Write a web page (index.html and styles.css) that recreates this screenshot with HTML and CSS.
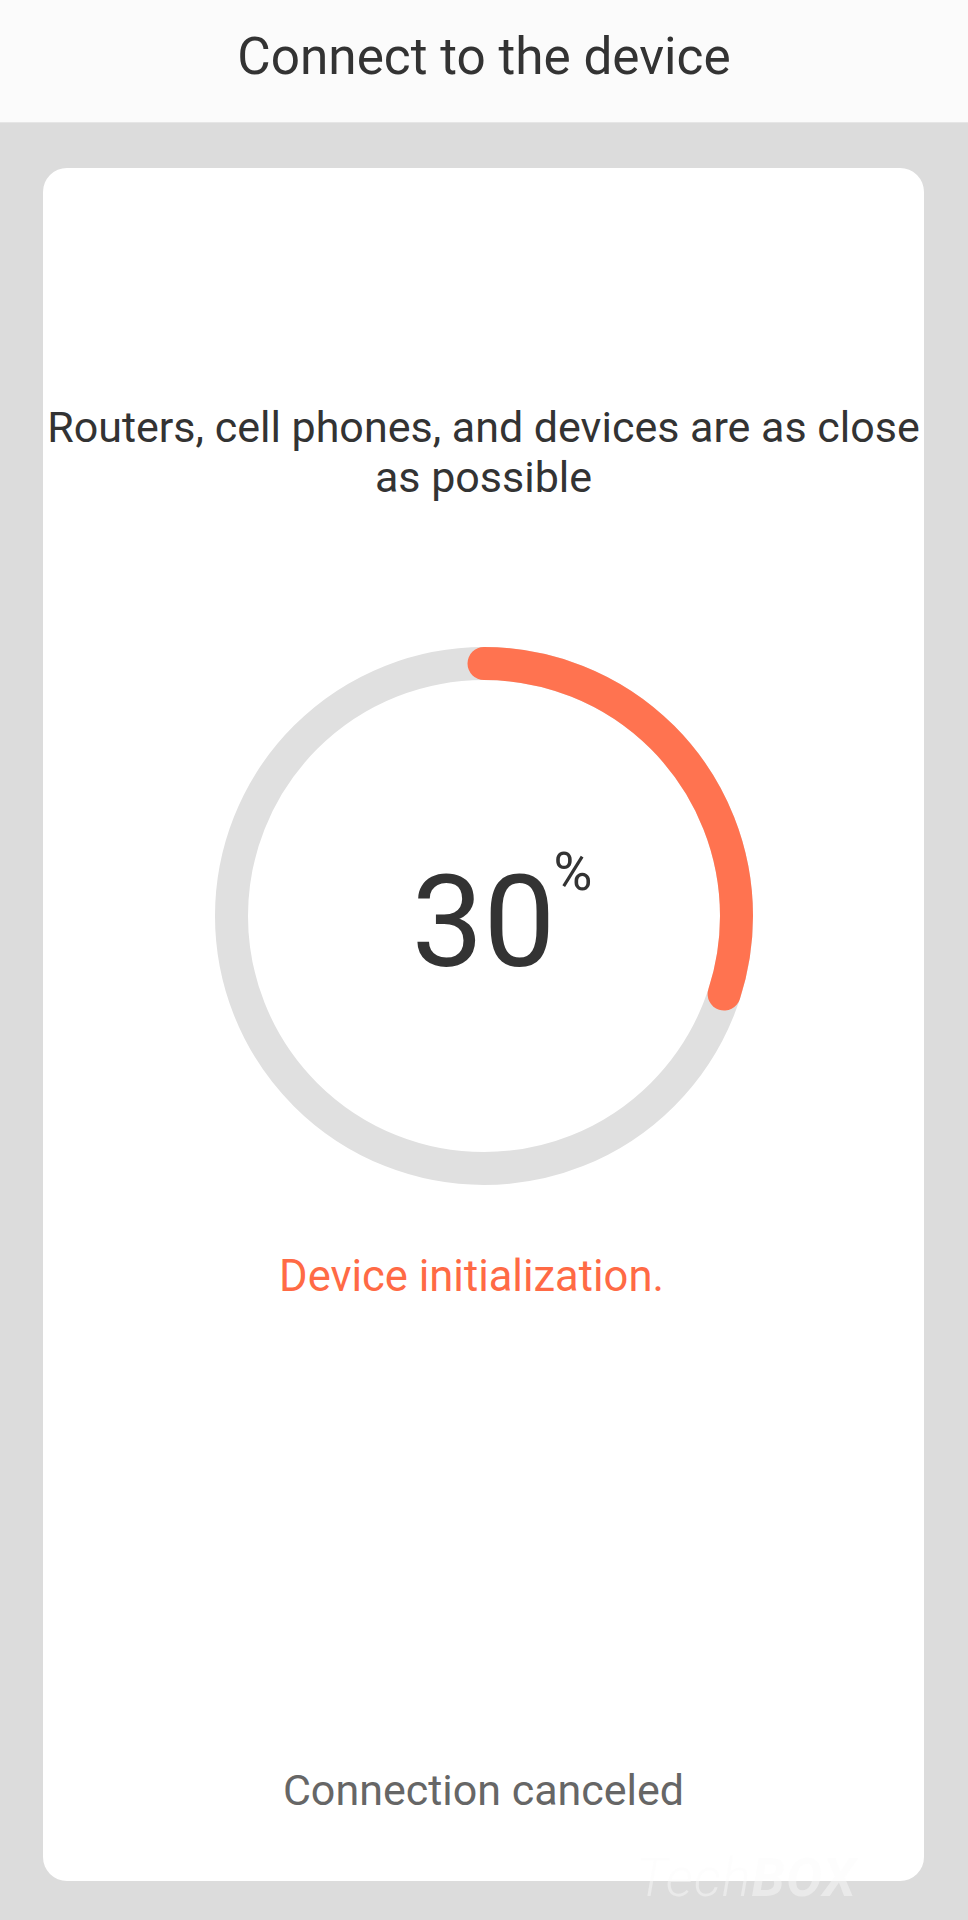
FILE: index.html
```html
<!DOCTYPE html>
<html lang="en">
<head>
<meta charset="utf-8">
<title>Connect to the device</title>
<link rel="stylesheet" href="styles.css">
</head>
<body>
<header class="topbar">
  <h1 class="topbar-title">Connect to the device</h1>
</header>
<main class="content">
  <section class="card">
    <p class="hint">Routers, cell phones, and devices are as close as possible</p>
    <div class="progress">
      <svg class="progress-ring" width="540" height="540" viewBox="0 0 540 540">
        <circle cx="270" cy="270" r="252.5" fill="none" stroke="#e0e0e0" stroke-width="33"/>
        <circle cx="270" cy="270" r="252.5" fill="none" stroke="#ff7350" stroke-width="33"
                stroke-linecap="round" stroke-dasharray="475.9 2000"
                transform="rotate(-90 270 270)"/>
      </svg>
      <div class="progress-value"><span class="progress-num">30<span class="progress-unit">%</span></span></div>
    </div>
    <p class="status">Device initialization.</p>
    <button class="cancel" type="button">Connection canceled</button>
  </section>
</main>
<div class="watermark"><span class="wm-light">Tech</span><span class="wm-bold">BOX</span></div>
</body>
</html>
```

FILE: styles.css
```css
* { box-sizing: border-box; }

html, body {
  margin: 0;
  padding: 0;
}

body {
  width: 968px;
  height: 1920px;
  background: #dcdcdc;
  font-family: Roboto, "Noto Sans", "Liberation Sans", sans-serif;
  color: #333333;
  position: relative;
  overflow: hidden;
}

.topbar {
  height: 123px;
  background: #fbfbfb;
  border-bottom: 1px solid #e6e6e6;
  padding-bottom: 8px;
}

.topbar-title {
  margin: 0;
  font-size: 51.3px;
  font-weight: 400;
  line-height: 114px;
  text-align: center;
  color: #333333;
}

.content {
  padding: 45px 44px 0 43px;
}

.card {
  height: 1713px;
  background: #ffffff;
  border-radius: 24px;
  display: flex;
  flex-direction: column;
  align-items: center;
  padding-bottom: 66px;
}

.hint {
  margin: 234px 0 0;
  font-size: 43px;
  line-height: 50px;
  text-align: center;
  color: #333333;
}

.progress {
  margin-top: 144px;
  width: 540px;
  height: 540px;
  display: grid;
}

.progress-ring {
  grid-area: 1 / 1;
  display: block;
}

.progress-value {
  grid-area: 1 / 1;
  justify-self: center;
  align-self: start;
  margin-top: 212px;
}

.progress-num {
  position: relative;
  display: inline-block;
  font-size: 128px;
  line-height: 128px;
  color: #333333;
}

.progress-unit {
  position: absolute;
  left: 100%;
  top: -12px;
  margin-left: -2px;
  font-size: 53px;
  line-height: 53px;
  color: #333333;
}

.status {
  margin: 66px 24px 0 0;
  font-size: 43.5px;
  line-height: 50px;
  color: #ff6a45;
}

.cancel {
  margin-top: auto;
  padding: 0;
  border: 0;
  background: none;
  font-family: inherit;
  font-size: 43px;
  line-height: 50px;
  color: #666666;
}

.watermark {
  position: absolute;
  left: 636px;
  top: 1850px;
  font-size: 54px;
  line-height: 56px;
  font-style: italic;
  color: rgba(250, 250, 250, 0.45);
  letter-spacing: 1px;
}

.wm-light { font-weight: 300; }
.wm-bold { font-weight: 700; }
```
